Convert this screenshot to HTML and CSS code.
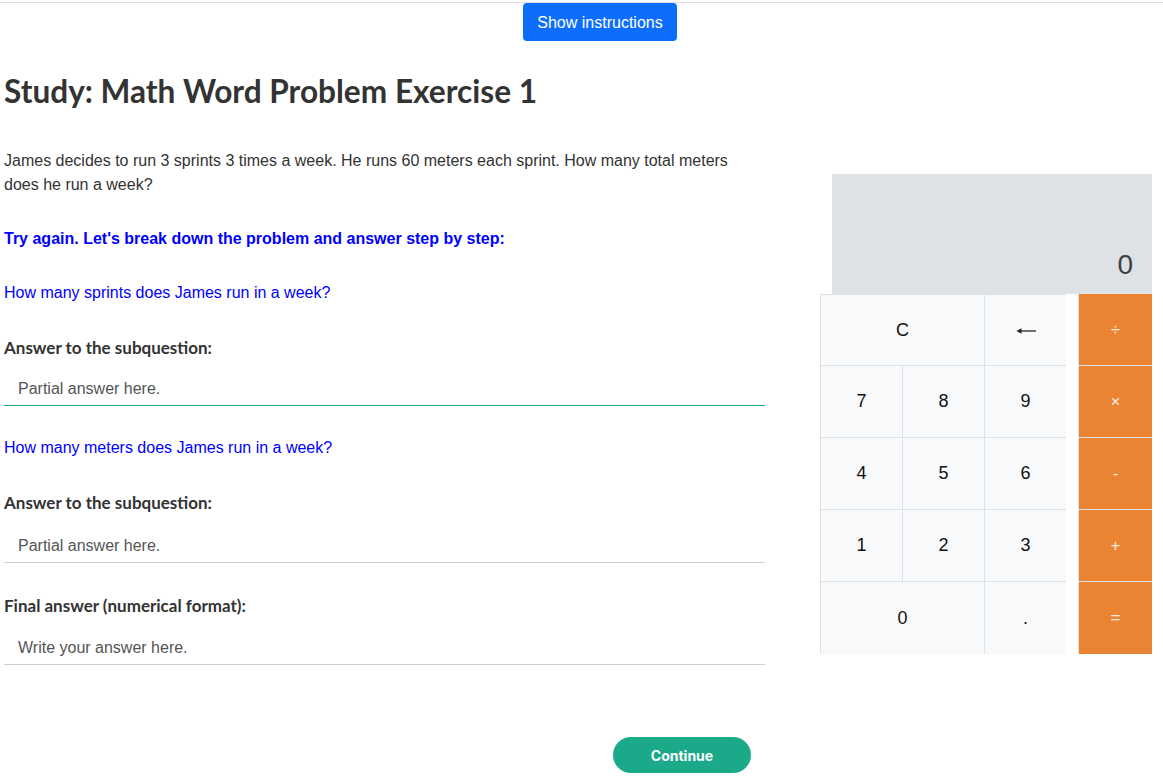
FILE: index.html
```html
<!DOCTYPE html>
<html lang="en">
<head>
<meta charset="utf-8">
<title>Study: Math Word Problem Exercise 1</title>
<link rel="stylesheet" href="styles.css">
</head>
<body>
<div class="topbar">
  <button class="btn-instructions" type="button">Show instructions</button>
</div>
<div class="main">
  <div class="left">
    <h1 class="title">Study: Math Word Problem Exercise 1</h1>
    <p class="problem">James decides to run 3 sprints 3 times a week. He runs 60 meters each sprint. How many total meters does he run a week?</p>
    <p class="try">Try again. Let's break down the problem and answer step by step:</p>
    <p class="subq">How many sprints does James run in a week?</p>
    <label class="label">Answer to the subquestion:</label>
    <input class="answer active" type="text" placeholder="Partial answer here." autofocus>
    <p class="subq">How many meters does James run in a week?</p>
    <label class="label">Answer to the subquestion:</label>
    <input class="answer gap9" type="text" placeholder="Partial answer here.">
    <label class="label">Final answer (numerical format):</label>
    <input class="answer gap8" type="text" placeholder="Write your answer here.">
  </div>
  <div class="right">
    <div class="display">0</div>
    <div class="keypad">
      <div class="numpad">
        <div class="key wide top">C</div>
        <div class="key top" aria-label="backspace">
          <svg class="arrow" width="20" height="10" viewBox="0 0 20 10" aria-hidden="true">
            <path d="M3 5 H20" stroke="#222" stroke-width="1.3" fill="none"/>
            <path d="M0.5 5 L5.5 2.2 L5.5 7.8 Z" fill="#222"/>
          </svg>
        </div>
        <div class="key">7</div>
        <div class="key">8</div>
        <div class="key">9</div>
        <div class="key">4</div>
        <div class="key">5</div>
        <div class="key">6</div>
        <div class="key">1</div>
        <div class="key">2</div>
        <div class="key">3</div>
        <div class="key wide last">0</div>
        <div class="key last">.</div>
      </div>
      <div class="ops">
        <div class="op">&divide;</div>
        <div class="op">&times;</div>
        <div class="op">-</div>
        <div class="op">+</div>
        <div class="op last">=</div>
      </div>
    </div>
  </div>
</div>
<div class="footer">
  <button class="btn-continue" type="button">Continue</button>
</div>
</body>
</html>
```
FILE: styles.css
```css
* { box-sizing: border-box; }
html, body { margin: 0; padding: 0; background: #fff; }
body {
  font-family: "Liberation Sans", Arial, sans-serif;
  font-size: 16px;
  color: #333;
  width: 1163px;
  overflow: hidden;
}
.topbar {
  margin-top: 2px;
  border-top: 1px solid #dcdcdc;
  display: flex;
  justify-content: center;
  padding-left: 37px;
}
.btn-instructions {
  height: 38px;
  width: 154px;
  border: none;
  border-radius: 4px;
  background: #0d6efd;
  color: #fff;
  font-family: "Liberation Sans", Arial, sans-serif;
  font-size: 16px;
  padding: 1px 0 0;
}
.main {
  display: flex;
  padding-top: 32px;
  padding-left: 4px;
}
.left {
  width: 761px;
  display: flex;
  flex-direction: column;
}
.title {
  margin: 0;
  font-family: Lato, "Open Sans", sans-serif;
  font-weight: 700;
  font-size: 31.6px;
  line-height: 36px;
  color: #333;
}
.problem {
  margin: 40px 0 0;
  line-height: 24px;
  color: #333;
}
.try {
  margin: 30px 0 0;
  line-height: 24px;
  font-weight: 700;
  color: #0000ff;
}
.subq {
  margin: 30px 0 0;
  line-height: 24px;
  color: #0000ff;
}
.label {
  display: block;
  margin-top: 31px;
  line-height: 24px;
  font-family: Lato, "Open Sans", sans-serif;
  font-weight: 700;
  font-size: 17px;
  color: #333;
}
.answer {
  display: block;
  margin-top: 7px;
  width: 761px;
  height: 39px;
  border: none;
  border-bottom: 1px solid #cfcfcf;
  padding: 5px 14px 0;
  font-family: "Liberation Sans", Arial, sans-serif;
  font-size: 16px;
  color: #333;
  outline: none;
  background: #fff;
  caret-color: #333;
}
.answer.gap9 { margin-top: 9px; }
.answer.gap8 { margin-top: 8px; }
.answer.active { border-bottom-color: #1aaa8a; }
.answer::placeholder { color: #555; opacity: 1; }
.right {
  margin-left: 55px;
  margin-top: 101px;
  width: 332px;
  display: flex;
  flex-direction: column;
}
.display {
  margin-left: 12px;
  width: 320px;
  height: 120px;
  background: #dee2e6;
  display: flex;
  align-items: flex-end;
  justify-content: flex-end;
  padding: 0 19px 15px 0;
  font-size: 28px;
  line-height: 1;
  color: #3a3f44;
}
.keypad {
  display: flex;
}
.numpad {
  display: grid;
  grid-template-columns: 82px 82px 82px;
  grid-auto-rows: 72px;
}
.key {
  background: #f8f9fa;
  border-left: 1px solid #dee2e6;
  border-bottom: 1px solid #dee2e6;
  display: flex;
  align-items: center;
  justify-content: center;
  font-size: 18px;
  color: #111;
}
.key.top { border-top: 1px solid #dee2e6; }
.key.wide { grid-column: span 2; }
.key.last { border-bottom: none; }
.arrow { display: block; margin-top: 2px; }
.ops {
  margin-left: 12px;
  width: 74px;
  display: flex;
  flex-direction: column;
}
.op {
  height: 72px;
  background: #ea8432;
  border-left: 1px solid #e3e3e3;
  border-bottom: 1px solid #e3e3e3;
  display: flex;
  align-items: center;
  justify-content: center;
  color: rgba(255, 255, 255, 0.88);
  font-size: 17px;
}
.op.last { border-bottom: none; }
.footer {
  margin-top: 72px;
  padding-left: 613px;
  display: flex;
}
.btn-continue {
  width: 138px;
  height: 36px;
  border: none;
  border-radius: 18px;
  background: #1aaa8a;
  color: #fff;
  font-family: Inter, "Liberation Sans", sans-serif;
  font-weight: 700;
  font-size: 14px;
  padding: 0;
}
```
